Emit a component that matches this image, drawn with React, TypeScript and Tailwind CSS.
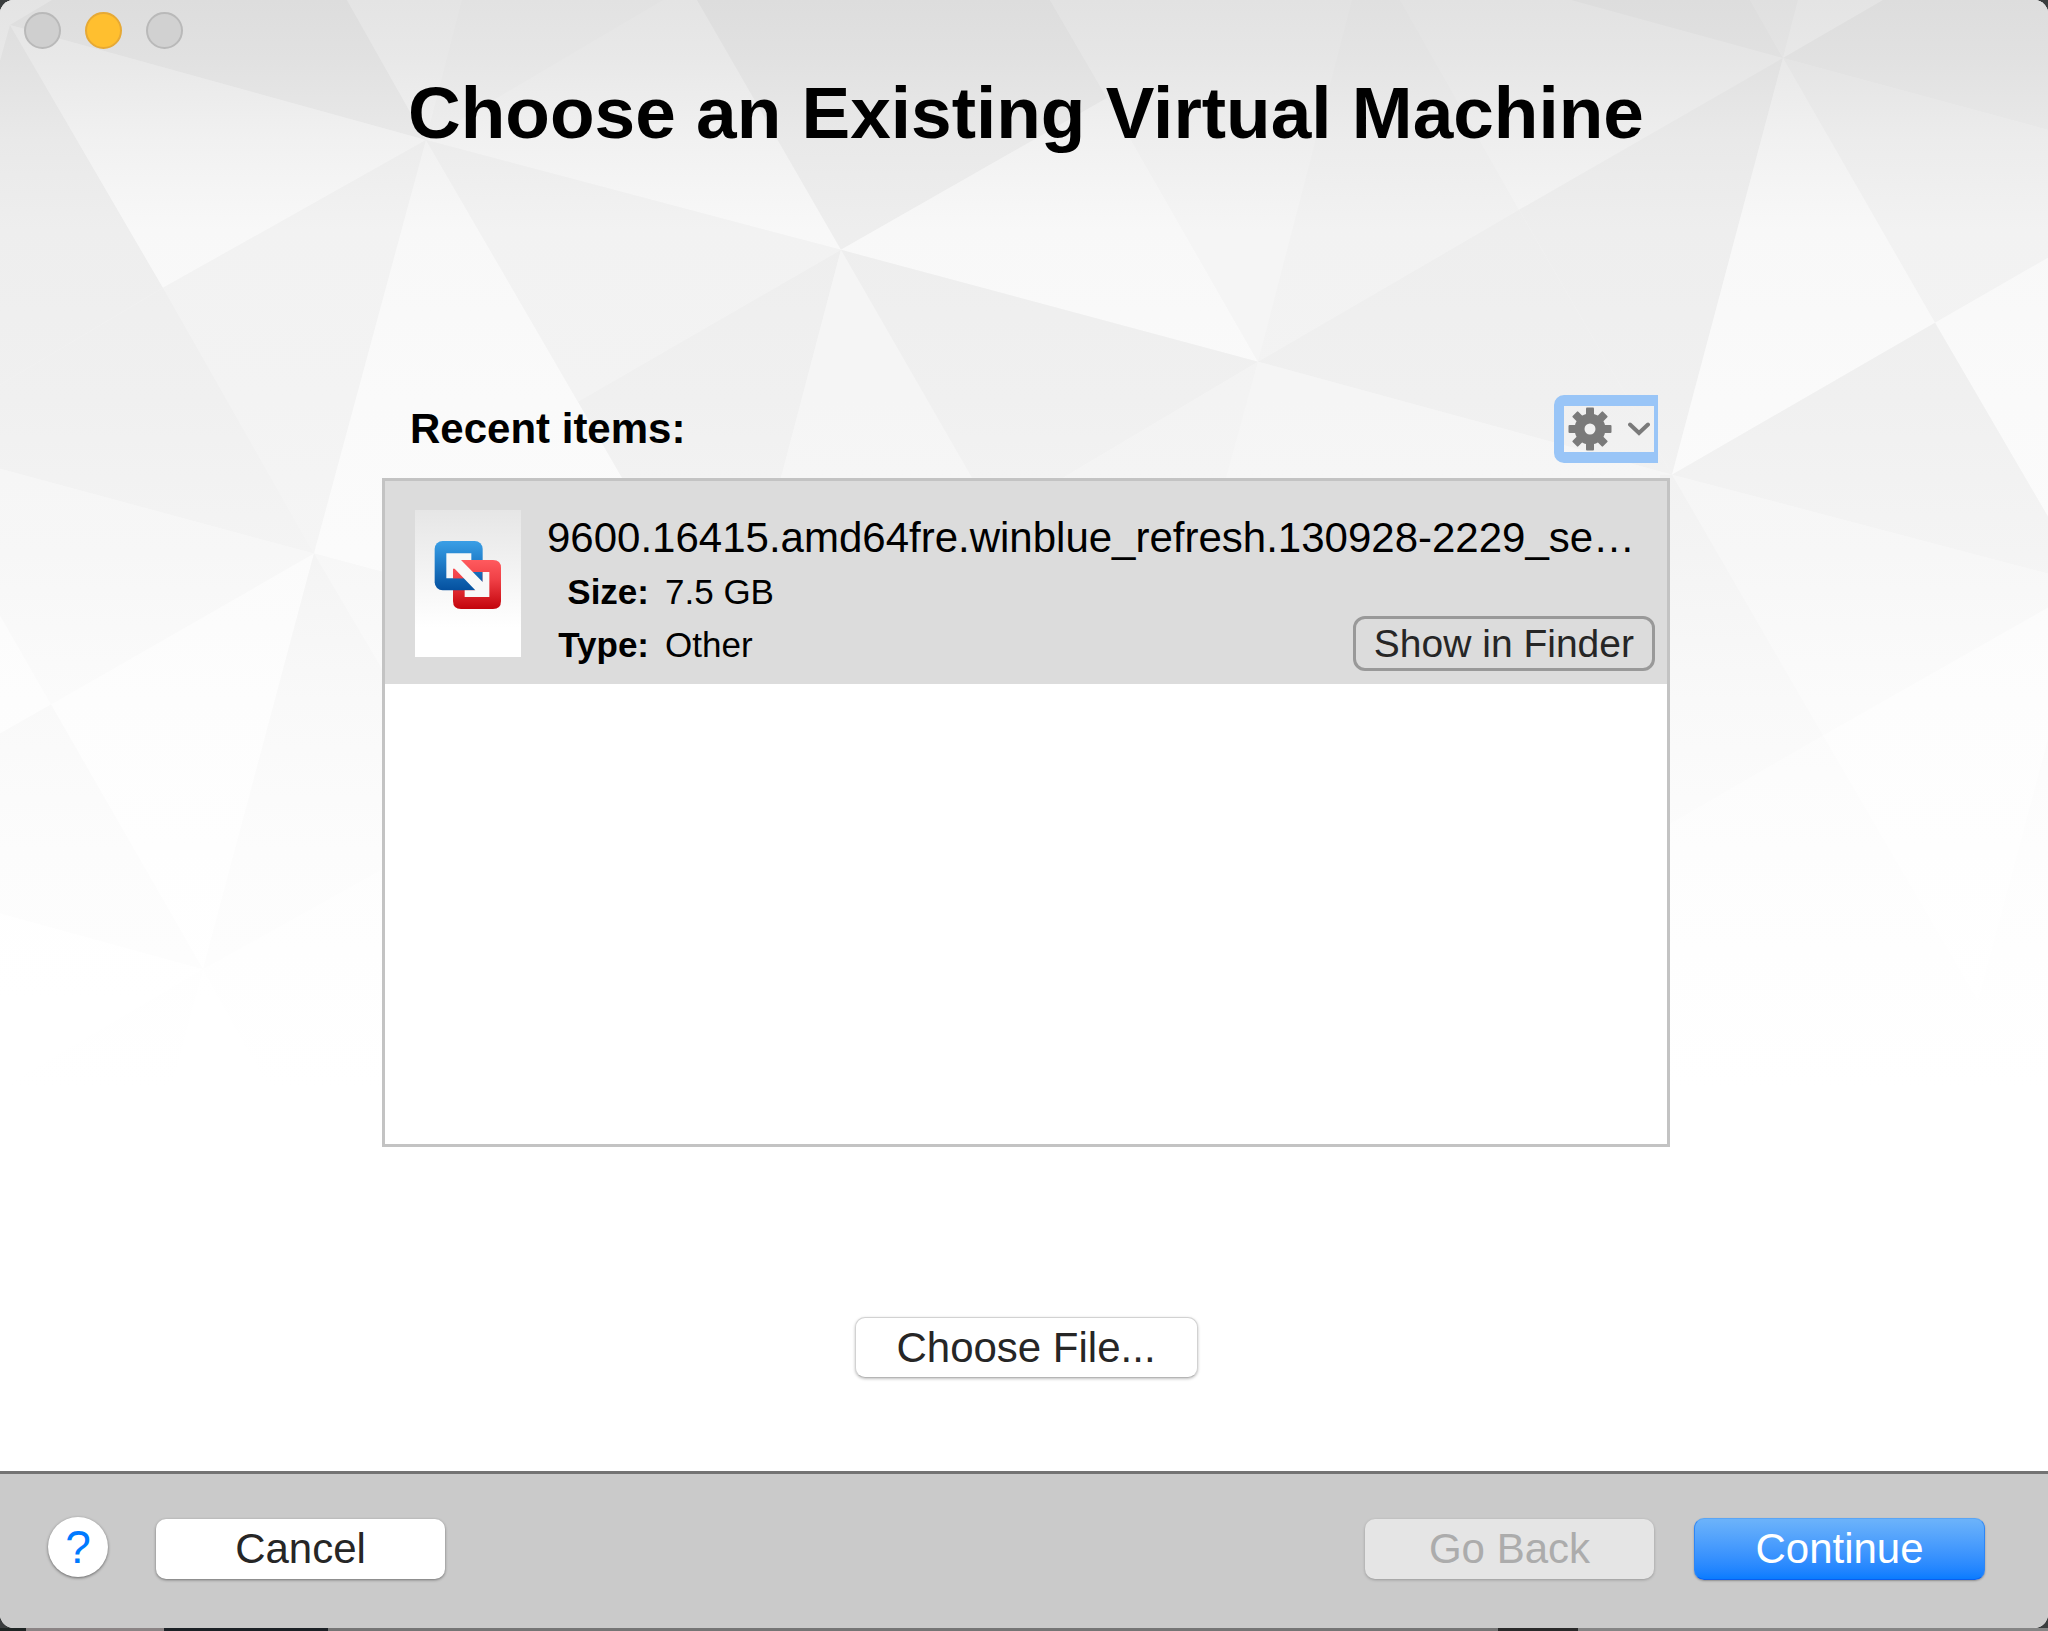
import clsx from 'clsx';
import { useState } from 'react';

type Tone = 'dark' | 'mid' | 'soft' | 'light';

// Vertical shading of the background facets
const TONES: Record<Tone, [number, string][]> = {
  dark: [
    [0, '#dddddd'],
    [58, '#e1e1e1'],
    [140, '#e9e9e9'],
    [230, '#eeeeee'],
    [400, '#f0f0f0'],
    [554, '#f4f4f4'],
    [700, '#f9f9f9'],
    [850, '#fcfcfc'],
    [960, '#fdfdfd'],
    [1090, '#ffffff'],
  ],
  mid: [
    [0, '#e0e0e0'],
    [58, '#e4e4e4'],
    [140, '#ececec'],
    [230, '#f2f2f2'],
    [400, '#f3f3f3'],
    [554, '#f5f5f5'],
    [800, '#fbfbfb'],
    [1090, '#ffffff'],
  ],
  soft: [
    [0, '#e2e2e2'],
    [58, '#e6e6e6'],
    [140, '#eeeeee'],
    [230, '#f5f5f5'],
    [400, '#f5f5f5'],
    [554, '#f7f7f7'],
    [700, '#fbfbfb'],
    [850, '#fdfdfd'],
    [950, '#fefefe'],
    [1090, '#ffffff'],
  ],
  light: [
    [0, '#e4e4e4'],
    [58, '#e8e8e8'],
    [140, '#f1f1f1'],
    [230, '#f8f8f8'],
    [400, '#fafafa'],
    [554, '#fbfbfb'],
    [700, '#fdfdfd'],
    [850, '#fefefe'],
    [1000, '#ffffff'],
  ],
};

const FACETS: [Tone, string][] = [
  ['light', '0,0 52,0 10,25 0,61'],
  ['dark', '52,0 347,0 426,140 10,25'],
  ['dark', '0,61 10,25 163,288 0,385'],
  ['light', '10,25 426,140 163,288'],
  ['light', '347,0 462,0 426,140'],
  ['soft', '462,0 663,0 426,140'],
  ['light', '663,0 697,0 841,250 426,140'],
  ['dark', '697,0 1050,0 1107,98 841,250'],
  ['soft', '1050,0 1275,0 1107,98'],
  ['light', '841,250 1107,98 1258,362'],
  ['soft', '1107,98 1275,0 1352,0 1258,362'],
  ['mid', '1352,0 1400,0 1519,210 1258,362'],
  ['soft', '1400,0 1571,0 1783,58 1519,210'],
  ['dark', '1258,362 1519,210 1672,475'],
  ['dark', '1519,210 1783,58 1672,475'],
  ['dark', '1571,0 1750,0 1783,58'],
  ['mid', '1750,0 1798,0 1783,58'],
  ['light', '1798,0 1883,0 1783,58'],
  ['dark', '1883,0 2048,0 2048,130 1783,58'],
  ['mid', '1783,58 2048,130 2048,258 1935,323'],
  ['light', '1783,58 1935,323 1672,475'],
  ['light', '1935,323 2048,258 2048,517'],
  ['dark', '1672,475 1935,323 2048,517 2048,574'],
  ['mid', '163,288 426,140 314,554'],
  ['dark', '0,385 163,288 314,554 0,469'],
  ['light', '426,140 622,478 730,666 314,554'],
  ['mid', '426,140 841,250 578,402'],
  ['dark', '578,402 841,250 781,478 622,478'],
  ['soft', '841,250 972,478 781,478'],
  ['dark', '841,250 1258,362 1063,478 972,478'],
  ['mid', '1258,362 1226,478 1063,478'],
  ['soft', '1258,362 1672,475 1672,480 1226,480'],
  ['soft', '0,469 314,554 51,705 0,616'],
  ['light', '0,616 51,705 0,734'],
  ['light', '314,554 203,970 51,705'],
  ['dark', '0,734 51,705 203,970 0,914'],
  ['light', '0,914 203,970 0,1090'],
  ['soft', '314,554 400,577 400,700'],
  ['dark', '314,554 400,700 400,860 203,970'],
  ['light', '203,970 270,1090 170,1090'],
  ['soft', '1672,475 2048,574 2048,608 1823,736'],
  ['dark', '1672,475 1823,736 1660,830 1660,475'],
  ['light', '1823,736 2048,608 2048,740 1978,1002'],
  ['soft', '2048,740 2048,1020 1978,1002'],
];

const FacetBackground = () => (
  <svg
    className="absolute inset-0 h-full w-full"
    viewBox="0 0 2048 1472"
    preserveAspectRatio="none"
    aria-hidden="true">
    <defs>
      {Object.entries(TONES).map(([tone, stops]) => (
        <linearGradient
          key={tone}
          id={`tone-${tone}`}
          gradientUnits="userSpaceOnUse"
          x1="0"
          y1="0"
          x2="0"
          y2="1472">
          {stops.map(([y, color]) => (
            <stop key={y} offset={y / 1472} stopColor={color} />
          ))}
        </linearGradient>
      ))}
    </defs>
    <rect width="2048" height="1472" fill="url(#tone-soft)" />
    {FACETS.map(([tone, points]) => (
      <polygon key={points} points={points} fill={`url(#tone-${tone})`} />
    ))}
  </svg>
);

const VmFileIcon = () => (
  <svg width="106" height="147" viewBox="0 0 318 441" aria-hidden="true">
    <defs>
      <linearGradient id="vm-paper" x1="0" y1="0" x2="0" y2="1">
        <stop offset="0" stopColor="#e6e6e6" />
        <stop offset="0.8" stopColor="#ffffff" />
      </linearGradient>
      <linearGradient id="vm-blue" gradientUnits="userSpaceOnUse" x1="0" y1="124" x2="0" y2="272">
        <stop offset="0" stopColor="#3a9fe6" />
        <stop offset="0.35" stopColor="#2584cf" />
        <stop offset="1" stopColor="#04509f" />
      </linearGradient>
      <linearGradient id="vm-red" gradientUnits="userSpaceOnUse" x1="0" y1="181" x2="0" y2="328">
        <stop offset="0" stopColor="#ff5a5e" />
        <stop offset="0.4" stopColor="#f04046" />
        <stop offset="1" stopColor="#c3040c" />
      </linearGradient>
    </defs>
    <rect width="318" height="441" fill="url(#vm-paper)" />
    <g transform="translate(-47 -31)">
      <rect x="106" y="124" width="144" height="148" rx="24" fill="url(#vm-blue)" />
      <path
        d="M185 181H281Q305 181 305 205V304Q305 328 281 328H185Q161 328 161 304V207Z"
        fill="url(#vm-red)"
      />
      <path d="M216 217H250V250L230 240ZM161 236H196L232 272H161Z" fill="url(#vm-blue)" />
      <path
        d="M141 161H216V181H185L250 247V217H270V292H196V272H228L166 207H161V236H141Z"
        fill="#f8f8f8"
      />
      <path d="M161 207L192 236H161Z" fill="url(#vm-red)" />
    </g>
  </svg>
);

const GearIcon = () => (
  <svg width="44" height="44" viewBox="-22 -22 44 44" aria-hidden="true">
    <circle r="10.5" fill="none" stroke="#7a7a7a" strokeWidth="10" />
    {[0, 45, 90, 135, 180, 225, 270, 315].map((angle) => (
      <rect
        key={angle}
        x="-4"
        y="-21.5"
        width="8"
        height="9"
        rx="1"
        fill="#7a7a7a"
        transform={`rotate(${angle})`}
      />
    ))}
  </svg>
);

const ChevronIcon = () => (
  <svg width="22" height="14" viewBox="0 0 22 14" aria-hidden="true">
    <path
      d="M2 2.5L11 11L20 2.5"
      fill="none"
      stroke="#7a7a7a"
      strokeWidth="4"
      strokeLinecap="round"
    />
  </svg>
);

const recentItems = [
  {
    name: '9600.16415.amd64fre.winblue_refresh.130928-2229_se…',
    size: '7.5 GB',
    type: 'Other',
  },
];

const App = () => {
  const [selected, setSelected] = useState(0);

  return (
    <div className="flex min-h-screen flex-col bg-[#3a3d3e] font-['Liberation_Sans',Arial,sans-serif] text-black">
      <div className="flex flex-1 flex-col overflow-hidden rounded-[14px] bg-white">
        <main className="relative flex flex-1 flex-col">
          <FacetBackground />

          <div className="relative flex flex-1 flex-col pl-1">
            {/* window buttons */}
            <div className="flex gap-6 px-5 pt-3">
              <button
                aria-label="Close"
                className="size-[37px] rounded-full border-2 border-[#b9b9b9] bg-[#cfcfcf]"
              />
              <button
                aria-label="Minimize"
                className="size-[37px] rounded-full border-2 border-[#e6a935] bg-[#ffbf2f]"
              />
              <button
                aria-label="Zoom"
                className="size-[37px] rounded-full border-2 border-[#b9b9b9] bg-[#d1d1d1]"
              />
            </div>

            <h1 className="mt-5 text-center text-[73px] leading-[88px] font-bold">
              Choose an Existing Virtual Machine
            </h1>

            <section className="mx-auto mt-[238px] flex w-full max-w-[1288px] flex-1 flex-col">
              <div className="flex h-[68px] items-center justify-between pr-3 pl-7">
                <h2 className="text-[42px] leading-[48px] font-bold">Recent items:</h2>
                <button
                  aria-label="Actions"
                  className="flex h-[68px] items-center gap-4 rounded-l-[10px] border-y-[11px] border-r-4 border-l-[10px] border-[#99c5f7] pr-1 pl-1">
                  <GearIcon />
                  <ChevronIcon />
                </button>
              </div>

              {/* recent list */}
              <ul className="mt-[15px] min-h-[420px] flex-1 border-[3px] border-[#c3c3c3] bg-white">
                {recentItems.map((item, index) => (
                  <li
                    key={item.name}
                    onClick={() => setSelected(index)}
                    className={clsx(
                      'flex h-[203px] gap-[26px] pt-[29px] pr-3 pl-[30px]',
                      selected === index && 'bg-[#dcdcdc]'
                    )}>
                    <VmFileIcon />
                    <div className="flex min-w-0 flex-1 flex-col">
                      <p className="text-[42px] leading-[56px] whitespace-nowrap">{item.name}</p>
                      <div className="flex justify-between">
                        <dl className="grid grid-cols-[102px_auto] gap-x-4 text-[35px] leading-[52px]">
                          <dt className="text-right font-bold">Size:</dt>
                          <dd>{item.size}</dd>
                          <dt className="text-right font-bold">Type:</dt>
                          <dd>{item.type}</dd>
                        </dl>
                        <button className="mt-[50px] h-[55px] rounded-xl border-[3px] border-[#999999] px-[18px] text-[39px] leading-[48px] text-[#262626]">
                          Show in Finder
                        </button>
                      </div>
                    </div>
                  </li>
                ))}
              </ul>
            </section>

            <button className="mx-auto mt-[170px] mb-[93px] h-[61px] w-[343px] rounded-[10px] border border-[#d2d2d2] border-b-[#b5b5b5] bg-white text-[42px] leading-[56px] text-[#262626] shadow-[0_1px_3px_rgba(0,0,0,0.25)]">
              Choose File...
            </button>
          </div>
        </main>

        <footer className="flex h-[157px] items-center border-t-[3px] border-[#737373] bg-[#cacaca] pr-[63px] pb-1 pl-12 text-[42px] leading-[56px]">
          <button
            aria-label="Help"
            className="mb-1 size-[60px] rounded-full bg-white text-[46px] leading-[58px] text-[#007aff] shadow-[0_1px_3px_rgba(0,0,0,0.5)]">
            ?
          </button>
          <button className="ml-12 h-[60px] w-[289px] rounded-[10px] bg-white text-[#262626] shadow-[0_1px_3px_rgba(0,0,0,0.45)]">
            Cancel
          </button>
          <button
            disabled
            className="ml-auto h-[60px] w-[289px] rounded-[10px] bg-[#e5e5e5] text-[#acacac] shadow-[0_1px_3px_rgba(0,0,0,0.25)]">
            Go Back
          </button>
          <button className="ml-10 h-[62px] w-[291px] rounded-[10px] border border-t-[#5aa5f5] border-r-[#2e86f5] border-b-[#0a5ff0] border-l-[#2e86f5] bg-linear-to-b from-[#6cb3fa] to-[#087cff] text-white shadow-[0_1px_2px_rgba(0,0,0,0.3)]">
            Continue
          </button>
        </footer>
      </div>

      {/* sliver of the desktop below the window */}
      <div className="flex h-[3px]">
        <div className="w-[26px] bg-[#1f2524]" />
        <div className="w-[138px] bg-[#8b8485]" />
        <div className="w-[164px] bg-[#1c2126]" />
        <div className="flex-1 bg-[#757575]" />
        <div className="w-[80px] bg-[#2a2a2a]" />
        <div className="w-[470px] bg-[#858585]" />
      </div>
    </div>
  );
};

export default App;
